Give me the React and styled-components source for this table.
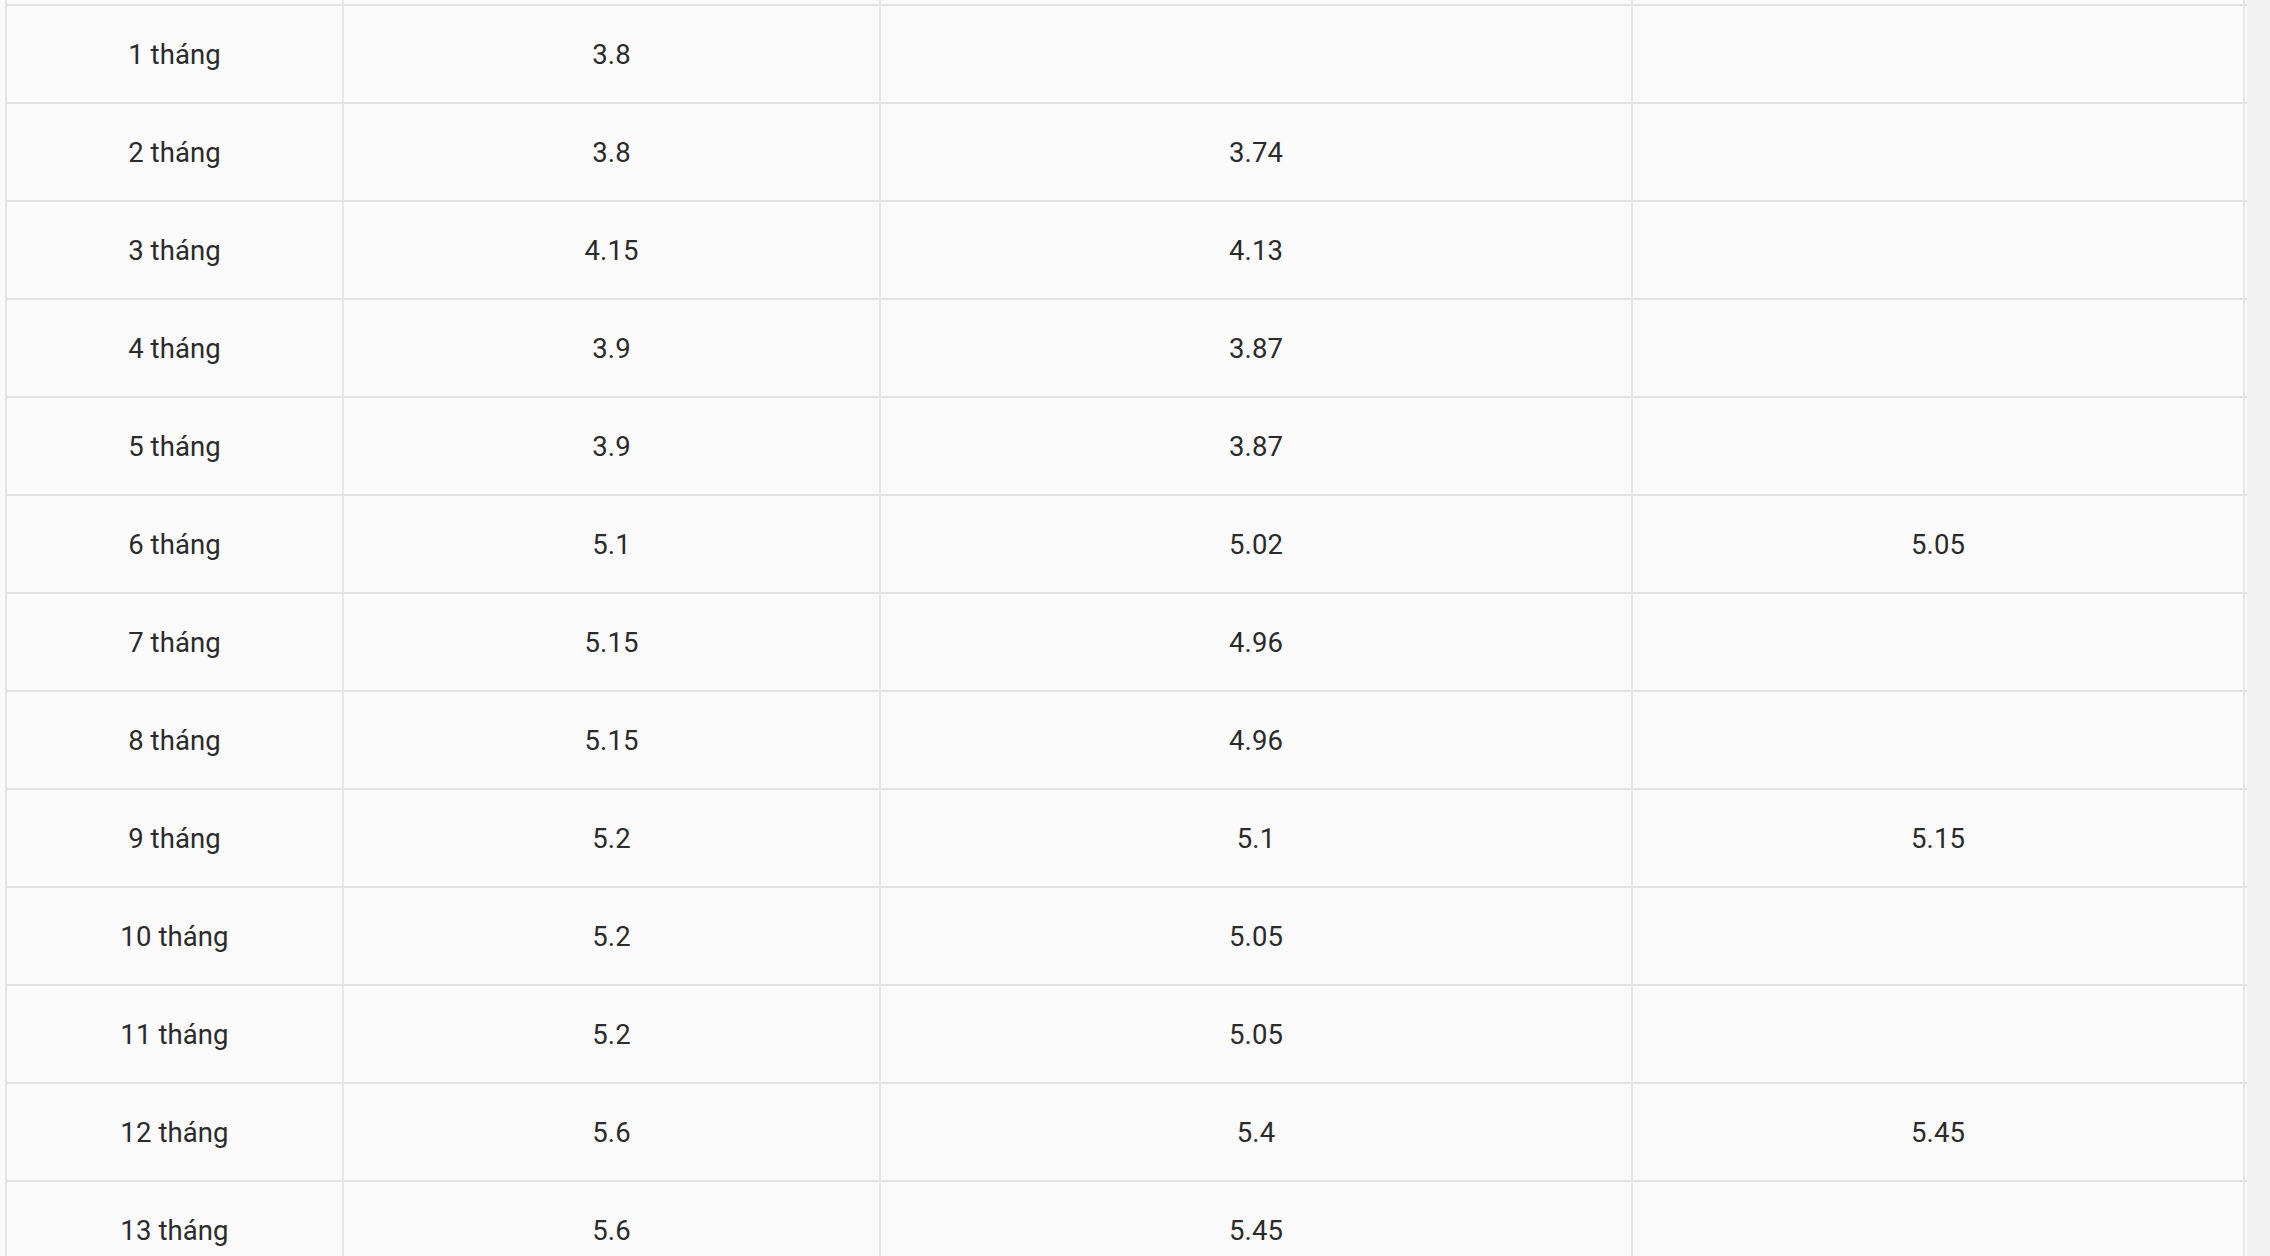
import React from 'react'
import styled, {createGlobalStyle} from 'styled-components'

const rates = [
  ['1 tháng', '3.8', '', ''],
  ['2 tháng', '3.8', '3.74', ''],
  ['3 tháng', '4.15', '4.13', ''],
  ['4 tháng', '3.9', '3.87', ''],
  ['5 tháng', '3.9', '3.87', ''],
  ['6 tháng', '5.1', '5.02', '5.05'],
  ['7 tháng', '5.15', '4.96', ''],
  ['8 tháng', '5.15', '4.96', ''],
  ['9 tháng', '5.2', '5.1', '5.15'],
  ['10 tháng', '5.2', '5.05', ''],
  ['11 tháng', '5.2', '5.05', ''],
  ['12 tháng', '5.6', '5.4', '5.45'],
  ['13 tháng', '5.6', '5.45', ''],
]

const GlobalStyle = createGlobalStyle`
  html, body {
    margin: 0;
    padding: 0;
    background: #f3f3f3;
    overflow: hidden;
  }
  body {
    font-family: Roboto, 'Liberation Sans', sans-serif;
  }
`

const Page = styled.div`
  width: 2270px;
  height: 1256px;
  overflow: hidden;
  background: linear-gradient(to right, #f9f9f9 0, #f9f9f9 2245px, #f2f2f2 2245px);
`

const Table = styled.div`
  margin-left: 5px;
  width: 2240px;
  border-left: 2px solid #e4e4e4;
  background: #fafafa;
`

const Row = styled.div`
  display: grid;
  grid-template-columns: 337px 537px 752px 612px;
  height: ${p => (p.$stub ? '4px' : '98px')};
  box-sizing: border-box;
  border-top: ${p => (p.$stub ? 'none' : '2px solid #e2e2e2')};
  overflow: hidden;
`

const Cell = styled.div`
  display: flex;
  align-items: center;
  justify-content: center;
  border-right: 2px solid #e6e6e6;
  font-size: 27.5px;
  color: #2b2b2b;
  letter-spacing: 0.1px;
`

export default function App() {
  return (
    <Page>
      <GlobalStyle/>
      <Table>
        <Row $stub>
          <Cell/><Cell/><Cell/><Cell/>
        </Row>
        {rates.map(r => (
          <Row key={r[0]}>
            {r.map((v, i) => <Cell key={i}>{v}</Cell>)}
          </Row>
        ))}
      </Table>
    </Page>
  )
}
